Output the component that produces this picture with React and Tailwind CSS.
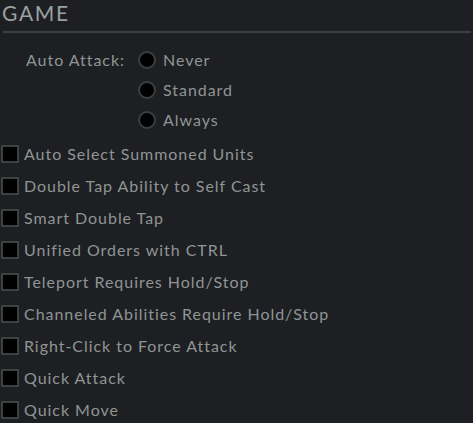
import React from 'react'

const font = { fontFamily: '"Lato", "Open Sans", sans-serif' }

const checks = [
  'Auto Select Summoned Units',
  'Double Tap Ability to Self Cast',
  'Smart Double Tap',
  'Unified Orders with CTRL',
  'Teleport Requires Hold/Stop',
  'Channeled Abilities Require Hold/Stop',
  'Right-Click to Force Attack',
  'Quick Attack',
  'Quick Move',
]

const Radio = ({ label }) => (
  <div className="flex items-center h-[30px]">
    <span className="w-[18px] h-[18px] rounded-full bg-black border-2 border-[#3a3f3f]" />
    <span className="ml-[7px] text-[16px] tracking-[0.06em] text-[#8e9595]">{label}</span>
  </div>
)

const Check = ({ label }) => (
  <div className="flex items-center h-[32px]">
    <span className="w-[18px] h-[18px] bg-black border-2 border-[#3c4242]" />
    <span className="ml-[5px] text-[16px] tracking-[0.06em] text-[#8e9595]">{label}</span>
  </div>
)

export default function App() {
  return (
    <div className="w-[473px] h-[423px] overflow-hidden bg-[#1e1f22] pl-[1px]" style={font}>
      <div className="pl-[1px] pt-[1px] text-[21px] leading-[24px] tracking-[0.08em] text-[#9aa1a1]">GAME</div>
      <div className="ml-[2px] mr-[2px] mt-[6px] h-[2px] bg-[#3b3f42]" />
      <div className="flex mt-[12px] pl-[25px]">
        <div className="h-[30px] flex items-center text-[16px] tracking-[0.06em] text-[#8e9595] w-[112px]">Auto Attack:</div>
        <div className="flex flex-col">
          <Radio label="Never" />
          <Radio label="Standard" />
          <Radio label="Always" />
        </div>
      </div>
      <div className="flex flex-col mt-[3px]">
        {checks.map((c) => (
          <Check key={c} label={c} />
        ))}
      </div>
    </div>
  )
}
